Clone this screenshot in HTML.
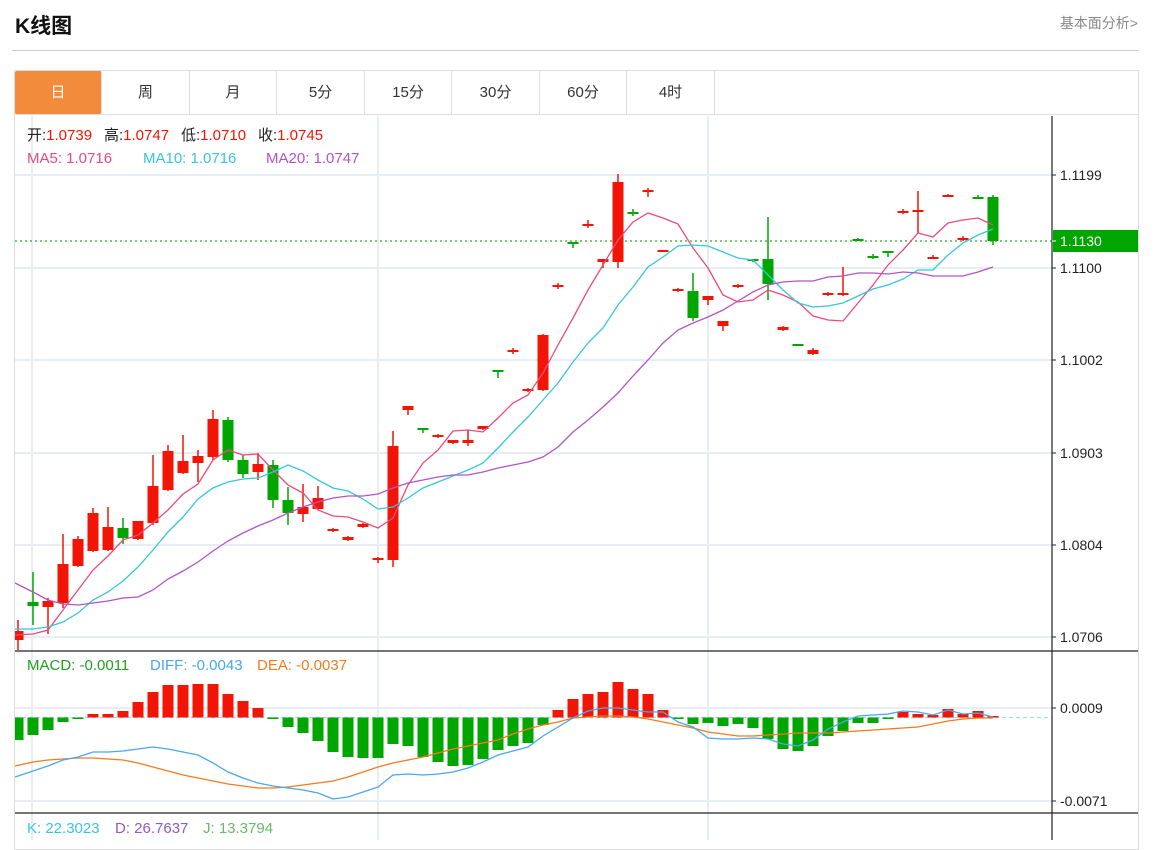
<!DOCTYPE html>
<html><head><meta charset="utf-8">
<style>
*{margin:0;padding:0;box-sizing:border-box}
body{width:1162px;height:840px;overflow:hidden;background:#fff;font-family:"Liberation Sans","Noto Sans CJK SC",sans-serif;position:relative}
.title{position:absolute;left:15px;top:10px;font-size:21px;font-weight:bold;color:#111}
.more{position:absolute;right:24px;top:13px;font-size:14px;color:#888}
.sep{position:absolute;left:12px;top:50px;width:1127px;height:1px;background:#ccc}
.box{position:absolute;left:14px;top:70px;width:1125px;height:780px;border:1px solid #ddd}
.tabs{position:absolute;left:15px;top:71px;height:44px;border-bottom:1px solid #ddd;width:1123px}
.tab{position:absolute;top:0;height:43px;line-height:43px;text-align:center;font-size:15px;color:#333;border-right:1px solid #ddd}
.tab.on{background:#f28c3c;color:#fff;border-radius:2px}
svg{position:absolute;left:0;top:0}
</style></head><body>
<div class="title">K线图</div>
<div class="more">基本面分析&gt;</div>
<div class="sep"></div>
<div class="box"></div>
<div class="tabs">
<div class="tab on" style="left:0;width:87px">日</div>
<div class="tab" style="left:87px;width:88px">周</div>
<div class="tab" style="left:175px;width:87px">月</div>
<div class="tab" style="left:262px;width:88px">5分</div>
<div class="tab" style="left:350px;width:87px">15分</div>
<div class="tab" style="left:437px;width:88px">30分</div>
<div class="tab" style="left:525px;width:87px">60分</div>
<div class="tab" style="left:612px;width:88px">4时</div>
</div>
<svg id="c" width="1162" height="840" xmlns="http://www.w3.org/2000/svg" font-family="Liberation Sans, Noto Sans CJK SC, sans-serif" font-size="14"></svg>
<script>
var s=document.getElementById('c'),h='<defs><clipPath id="cp"><rect x="15" y="116" width="1037" height="724"/></clipPath></defs><g clip-path="url(#cp)">';
var R='#f21404',G='#00a600';
function L(x1,y1,x2,y2,c,w,d){h+='<line x1="'+x1+'" y1="'+y1+'" x2="'+x2+'" y2="'+y2+'" stroke="'+c+'" stroke-width="'+(w||1)+'"'+(d?' stroke-dasharray="'+d+'"':'')+'/>';}
function T(x,y,t,c,a){h+='<text x="'+x+'" y="'+y+'" fill="'+c+'"'+(a?' '+a:'')+'>'+t+'</text>';}
[175,268,360,453,545,637,708,801].forEach(function(y){L(15,y,1052,y,'#e6edf3',2)});
[32,378,708].forEach(function(x){L(x,116,x,840,'#e6edf3',2)});
L(15,241,1052,241,'#2aa82a',1.2,'2,3');
L(15,717.5,1052,717.5,'#a8d8ee',1.2,'4,3');
var C=[[R,631,640,620,650],[G,602,606,572,625],[R,601,607,598,634],[R,564,603,534,608],[R,539,566,536,567],[R,513,551,508,552],[R,527,550,507,551],[G,528,538,518,544],[R,521,539,521,540],[R,486,523,455,525],[R,451,490,445,491],[R,461,473,435,474],[R,456,463,450,482],[R,419,457,410,460],[G,420,460,417,462],[G,460,474,455,478],[R,464,472,453,480],[G,465,500,460,508],[G,500,513,487,525],[R,507,514,484,522],[R,498,509,486,510],[R,529,531,528,532],[R,537,540,536,541],[R,524,527,523,528],[R,558,560,557,563],[R,446,560,431,567],[R,406,410,406,415],[G,428,430,428,433],[R,435,437,434,438],[R,440,443,440,444],[R,440,443,430,446],[R,426,429,426,430],[G,370,371,370,378],[R,350,352,348,354],[R,389,391,388,392],[R,335,390,334,391],[R,285,287,283,289],[G,242,243,242,248],[R,224,226,220,228],[R,259,262,259,268],[R,182,262,174,268],[G,212,213,209,216],[R,190,192,188,197],[R,250,252,250,252],[R,289,291,288,292],[G,291,318,273,321],[R,296,300,296,305],[R,321,326,321,331],[R,285,287,284,288],[G,259,261,259,262],[G,259,284,217,300],[R,327,330,326,331],[G,344,345,344,345],[R,350,354,348,355],[R,293,295,292,296],[R,293,295,267,296],[G,239,241,238,241],[G,256,257,254,259],[G,251,252,251,257],[R,211,212,209,214],[R,210,212,191,233],[R,257,259,255,259],[R,195,196,194,197],[R,238,240,236,241],[G,197,198,195,199],[G,197,241,195,245]];
C.forEach(function(c,i){var x=18+15*i;L(x,c[3],x,c[4],c[0],1.5);var bh=Math.max(c[2]-c[1],2);h+='<rect x="'+(x-5.5)+'" y="'+c[1]+'" width="11" height="'+bh+'" fill="'+c[0]+'"/>';});
function P(a,c){var p=a.map(function(y,i){return (i==0?15:18+15*i)+','+y}).join(' ');h+='<polyline points="'+p+'" fill="none" stroke="'+c+'" stroke-width="1.3"/>';}
P([635,634,630,610,590,570,556,540,535,523,510,494,484,460,450,455,454,470,485,493,510,516,517,522,528,518,485,463,450,431,430,432,418,403,395,373,345,318,290,265,240,222,213,218,224,248,268,295,302,300,290,295,302,316,320,321,303,285,265,250,233,237,223,220,218,225],'#ea4a7e');
P([629,629,627,622,613,600,592,581,567,550,532,517,499,488,482,479,478,472,465,471,480,488,491,499,509,507,498,488,482,476,470,463,448,432,417,400,383,362,343,328,305,287,267,257,246,245,246,252,258,260,275,290,303,307,306,303,296,289,285,279,270,270,255,243,235,229],'#36c6dc');
P([583,592,600,604,605,603,601,598,597,590,579,571,562,551,541,533,526,520,513,507,502,498,496,496,494,488,483,480,477,475,475,472,468,465,462,457,447,432,420,407,393,376,360,343,330,323,317,310,301,292,285,282,281,281,277,276,273,273,274,272,273,276,276,276,272,267],'#b354c4');
var M=[740,735,730,722,719,714,714,711,702,692,685,685,684,684,694,701,708,719,727,733,741,752,757,758,758,744,746,757,762,766,765,759,750,746,743,725,710,699,694,692,682,689,694,710,719,724,723,726,724,728,739,749,751,746,736,731,723,723,719,712,714,715,709,714,711,716];
M.forEach(function(y,i){var x=18+15*i,z=717.5;if(y<z)h+='<rect x="'+(x-5.5)+'" y="'+y+'" width="11" height="'+(z-y)+'" fill="'+R+'"/>';else h+='<rect x="'+(x-5.5)+'" y="'+z+'" width="11" height="'+Math.max(y-z,1.5)+'" fill="'+G+'"/>';});
P([766,762,760,759,758,758,759,760,763,767,771,775,778,781,784,786,788,788,787,785,783,781,777,772,767,763,760,757,753,749,746,743,740,734,729,725,722,718,717,716,716,717,719,722,725,728,732,734,736,736,735,734,733,733,733,732,731,730,729,728,727,724,721,719,718,718],'#f57a1c');
P([777,771,766,760,757,752,752,751,749,747,749,752,755,763,772,778,783,786,788,790,793,799,797,792,787,775,774,775,774,772,768,762,755,751,747,736,727,718,711,708,708,710,712,712,722,727,738,739,739,738,739,744,746,740,729,722,716,715,714,711,712,715,710,714,713,717],'#4aa6f0');
h+='</g>';
L(1052,116,1052,840,'#222',1.2);
L(15,651,1138,651,'#222',1.2);L(15,813,1138,813,'#222',1.2);
[[175,'1.1199'],[268,'1.1100'],[360,'1.1002'],[453,'1.0903'],[545,'1.0804'],[637,'1.0706'],[708,'0.0009'],[801,'-0.0071']].forEach(function(a){L(1052,a[0],1056,a[0],'#222');T(1060,a[0]+5,a[1],'#222');});
h+='<rect x="1053" y="230" width="85" height="22" fill="#00a600"/>';L(1052,241,1056,241,'#fff');T(1060,246,'1.1130','#fff');
h+='<text x="27" y="140" fill="#222" font-size="15">开:<tspan fill="'+R+'">1.0739</tspan></text>';
h+='<text x="104" y="140" fill="#222" font-size="15">高:<tspan fill="'+R+'">1.0747</tspan></text>';
h+='<text x="181" y="140" fill="#222" font-size="15">低:<tspan fill="'+R+'">1.0710</tspan></text>';
h+='<text x="258" y="140" fill="#222" font-size="15">收:<tspan fill="'+R+'">1.0745</tspan></text>';
T(27,163,'MA5: 1.0716','#ea4a7e','font-size="15"');T(143,163,'MA10: 1.0716','#36c6dc','font-size="15"');T(266,163,'MA20: 1.0747','#b354c4','font-size="15"');
T(27,670,'MACD: -0.0011','#1fa11f','font-size="15"');T(150,670,'DIFF: -0.0043','#4aa6f0','font-size="15"');T(257,670,'DEA: -0.0037','#f57a1c','font-size="15"');
T(27,833,'K: 22.3023','#36c6dc','font-size="15"');T(115,833,'D: 26.7637','#8a5cc8','font-size="15"');T(203,833,'J: 13.3794','#6bb86b','font-size="15"');
s.innerHTML=h;
</script>
</body></html>
